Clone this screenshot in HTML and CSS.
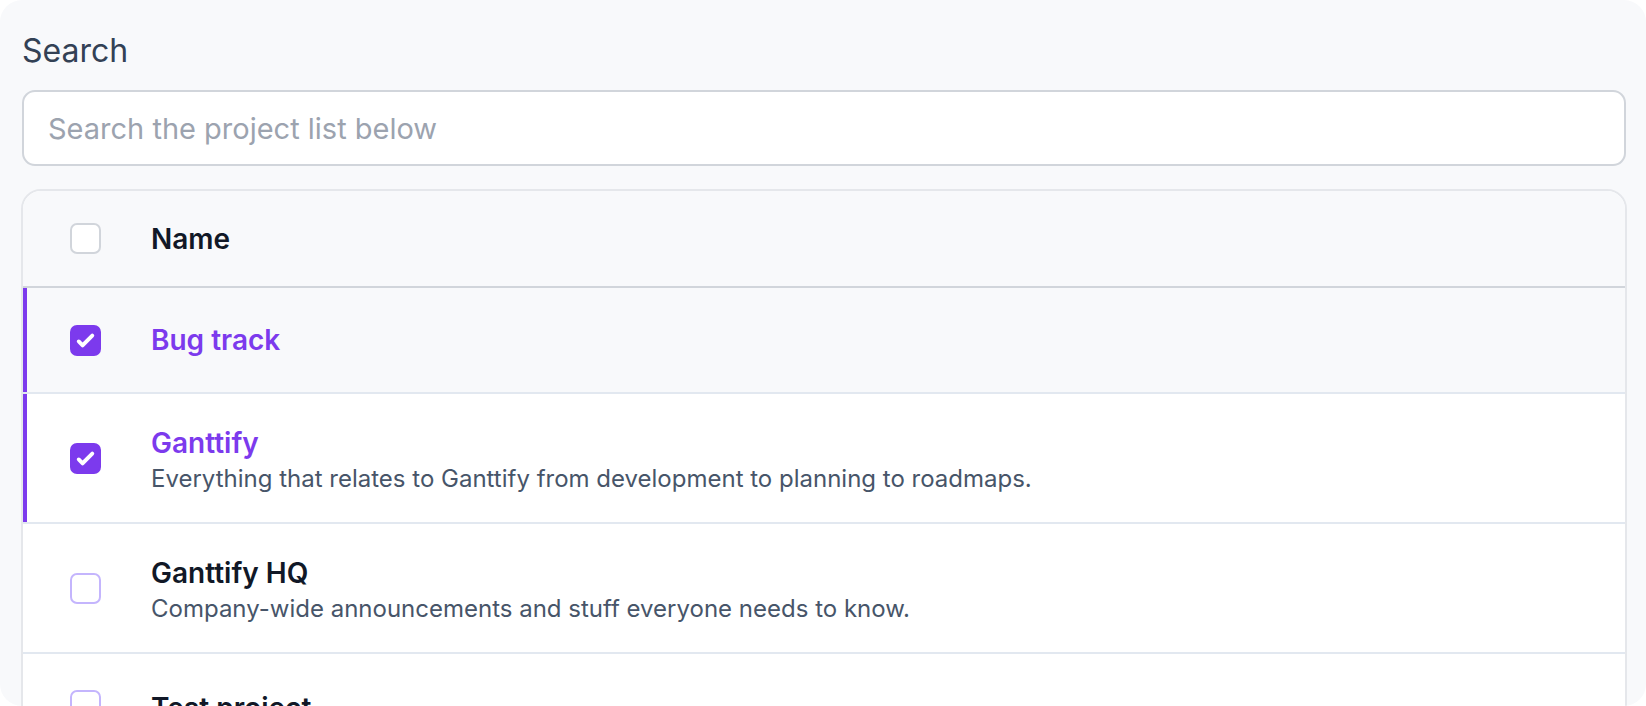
FILE: index.html
```html
<!DOCTYPE html>
<html lang="en">
<head>
<meta charset="utf-8">
<title>Projects</title>
<link rel="stylesheet" href="styles.css">
</head>
<body>
<div class="panel">
  <label class="label" for="q">Search</label>
  <input id="q" class="search" type="text" placeholder="Search the project list below">
  <div class="card">
    <div class="row head">
      <span class="box"></span>
      <span class="title">Name</span>
    </div>
    <div class="row sel gray single">
      <span class="box on"><svg viewBox="0 0 16 16"><path d="M12.207 4.793a1 1 0 010 1.414l-5 5a1 1 0 01-1.414 0l-2-2a1 1 0 011.414-1.414L6.5 9.086l4.293-4.293a1 1 0 011.414 0z" fill="#fff"/></svg></span>
      <div class="text"><div class="title">Bug track</div></div>
    </div>
    <div class="row sel">
      <span class="box on"><svg viewBox="0 0 16 16"><path d="M12.207 4.793a1 1 0 010 1.414l-5 5a1 1 0 01-1.414 0l-2-2a1 1 0 011.414-1.414L6.5 9.086l4.293-4.293a1 1 0 011.414 0z" fill="#fff"/></svg></span>
      <div class="text two"><div class="title">Ganttify</div><div class="desc">Everything that relates to Ganttify from development to planning to roadmaps.</div></div>
    </div>
    <div class="row">
      <span class="box light"></span>
      <div class="text two"><div class="title">Ganttify HQ</div><div class="desc">Company-wide announcements and stuff everyone needs to know.</div></div>
    </div>
    <div class="row last">
      <span class="box light"></span>
      <div class="text"><div class="title">Test project</div></div>
    </div>
  </div>
</div>
</body>
</html>
```
FILE: styles.css
```css
html, body {
  margin: 0;
  background: #ffffff;
}
body {
  font-family: Inter, "Noto Sans", sans-serif;
}
.panel {
  height: 706px;
  box-sizing: border-box;
  background: #f8f9fb;
  border-radius: 22px;
  overflow: hidden;
  padding: 31px 19px 0 21px;
  display: flex;
  flex-direction: column;
}
.label {
  display: block;
  flex: none;
  font-size: 32px;
  line-height: 40px;
  color: #334155;
  padding-left: 1px;
}
.search {
  flex: none;
  margin: 19px 1px 0 1px;
  height: 76px;
  box-sizing: border-box;
  border: 2px solid #d1d5db;
  border-radius: 13px;
  background: #ffffff;
  padding: 0 24px;
  font-family: Inter, "Noto Sans", sans-serif;
  font-size: 29px;
  color: #111827;
  outline: none;
}
.search::placeholder {
  color: #9ca3af;
}
.card {
  flex: none;
  margin-top: 23px;
  border: 2px solid #e5e7eb;
  border-radius: 20px;
  background: #ffffff;
  overflow: hidden;
}
.row {
  position: relative;
  display: flex;
  align-items: center;
  gap: 50px;
  padding: 0 0 0 47px;
  height: 128px;
  border-bottom: 2px solid #e2e8f0;
}
.row.head {
  height: 95px;
  background: #f8f9fb;
  border-bottom-color: #d1d5db;
}
.row.gray {
  background: #f8f9fb;
}
.row.single {
  height: 104px;
}
.row.last {
  align-items: flex-start;
  padding-top: 36px;
}
.row.sel::before {
  content: "";
  position: absolute;
  left: 0;
  top: 0;
  bottom: 0;
  width: 4px;
  background: #7c3aed;
}
.box {
  flex: none;
  width: 31px;
  height: 31px;
  box-sizing: border-box;
  border: 2px solid #d1d5db;
  border-radius: 7px;
  background: #ffffff;
  display: flex;
  align-items: center;
  justify-content: center;
}
.box.light {
  border-color: #c4b5fd;
}
.box.on {
  background: #7c3aed;
  border-color: #7c3aed;
}
.box svg {
  width: 31px;
  height: 31px;
  flex: none;
}
.text {
  display: flex;
  flex-direction: column;
}
.text.two {
  padding-top: 5px;
}
.title {
  font-size: 28px;
  line-height: 36px;
  font-weight: 600;
  color: #111827;
}
.sel .title {
  color: #7c3aed;
}
.desc {
  font-size: 24px;
  line-height: 35px;
  color: #475569;
}
```
